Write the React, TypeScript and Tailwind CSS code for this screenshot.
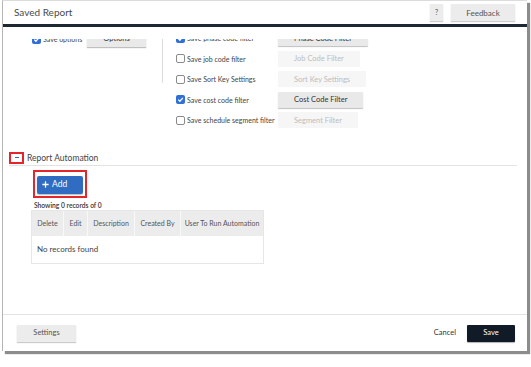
import React from "react";

function Box({ checked }: { checked?: boolean }) {
  return checked ? (
    <span className="w-[9px] h-[9px] rounded-[2px] bg-[#2f6fd6] flex items-center justify-center shrink-0">
      <svg width="7" height="7" viewBox="0 0 10 10">
        <path d="M1.8 5.2 L4.1 7.5 L8.4 2.6" stroke="white" strokeWidth="1.8" fill="none" />
      </svg>
    </span>
  ) : (
    <span className="w-[9px] h-[9px] rounded-[2px] border border-[#8a8a8a] bg-white shrink-0" />
  );
}

function FilterBtn({ label, enabled }: { label: string; enabled?: boolean }) {
  return enabled ? (
    <span className="h-[16px] px-[16px] flex items-center bg-[#e9e9e9] text-[#333] text-[7.5px] rounded-[1px] shadow-[0_1px_1px_rgba(0,0,0,0.25)] whitespace-nowrap">
      {label}
    </span>
  ) : (
    <span className="h-[16px] px-[16px] flex items-center bg-[#f6f6f6] text-[#bdbdbd] text-[7.5px] rounded-[1px] whitespace-nowrap">
      {label}
    </span>
  );
}

const rows = [
  { label: "Save phase code filter", checked: true, btn: "Phase Code Filter", enabled: true },
  { label: "Save job code filter", checked: false, btn: "Job Code Filter", enabled: false },
  { label: "Save Sort Key Settings", checked: false, btn: "Sort Key Settings", enabled: false },
  { label: "Save cost code filter", checked: true, btn: "Cost Code Filter", enabled: true },
  { label: "Save schedule segment filter", checked: false, btn: "Segment Filter", enabled: false },
];

export default function App() {
  return (
    <div className="w-[531px] h-[367px] bg-white font-['Lato',sans-serif] overflow-hidden">
      <div className="ml-[2px] w-[525px] h-[351px] bg-white border-l border-t border-[#b5b5b5] border-t-[#dcdcdc] shadow-[3px_3px_1px_#8c8c8c] flex flex-col">
        {/* Header */}
        <div className="h-[23px] flex items-center pl-[11px] pr-[12px] shrink-0">
          <span className="text-[10px] text-[#4a4a4a]">Saved Report</span>
          <div className="flex-1" />
          <span className="w-[13px] h-[17px] flex items-center justify-center bg-[#ececec] text-[#555] text-[7px] shadow-[0_1px_1px_rgba(0,0,0,0.2)]">?</span>
          <span className="ml-[8px] w-[64px] h-[17px] flex items-center justify-center bg-[#ececec] text-[#555] text-[8px] shadow-[0_1px_1px_rgba(0,0,0,0.2)]">Feedback</span>
        </div>
        <div className="h-[3px] bg-[#1e2833] shrink-0" />
        <div className="h-[12px] shrink-0" />

        {/* Scroll body */}
        <div className="flex-1 overflow-hidden">
          <div className="mt-[-11px]">
            <div className="flex">
              <div className="w-[160px] h-[55px] border-r border-[#dcdcdc] pl-[29px]">
                <div className="h-[22px] flex items-center">
                  <Box checked />
                  <span className="ml-[2px] text-[7px] text-[#444] w-[44px] whitespace-nowrap">Save options</span>
                  <span className="h-[16px] w-[59px] flex items-center justify-center bg-[#e9e9e9] text-[#333] text-[7.5px] shadow-[0_1px_1px_rgba(0,0,0,0.25)]">Options</span>
                </div>
              </div>
              <div className="pl-[13px]">
                {rows.map((r) => (
                  <div key={r.label} className="h-[20.5px] flex items-center">
                    <div className="w-[102px] flex items-center">
                      <Box checked={r.checked} />
                      <span className="ml-[2px] text-[7px] text-[#444] whitespace-nowrap">{r.label}</span>
                    </div>
                    <FilterBtn label={r.btn} enabled={r.enabled} />
                  </div>
                ))}
              </div>
            </div>

            {/* Report Automation */}
            <div className="mt-[21px] ml-[6px] mr-[10px] h-[14px] border-b border-[#e3e3e3] flex items-center relative">
              <span className="w-[15px] h-[12px] border-2 border-[#e3262b] flex items-center justify-center self-start">
                <span className="w-[4px] h-[1.5px] bg-[#2f6cc2]" />
              </span>
              <span className="ml-[3px] text-[8.5px] text-[#444]">Report Automation</span>
            </div>

            <div className="ml-[30px] mt-[4px] w-[54px] h-[28px] border-2 border-[#e3262b] px-[2px] pt-[4px] pb-[2px]">
              <div className="w-full h-full bg-[#2f6cc2] rounded-[2px] flex items-center pl-[5px] text-white shadow-[0_1px_1px_rgba(0,0,0,0.25)]">
                <svg width="7" height="7" viewBox="0 0 10 10">
                  <path d="M5 0.5 V9.5 M0.5 5 H9.5" stroke="white" strokeWidth="1.8" />
                </svg>
                <span className="ml-[3px] text-[8.5px]">Add</span>
              </div>
            </div>

            <div className="ml-[31px] mt-[3px] h-[9px] flex items-center text-[6.7px] text-[#333] font-semibold">
              Showing 0 records of 0
            </div>

            <div className="ml-[28px] w-[233px] border border-[#e6e6e6]">
              <div className="flex h-[25px] bg-[#ececec] text-[7px] text-[#555]">
                <div className="w-[32px] flex items-center justify-center border-r border-[#f8f8f8]">Delete</div>
                <div className="w-[24px] flex items-center justify-center border-r border-[#f8f8f8]">Edit</div>
                <div className="w-[47px] flex items-center justify-center border-r border-[#f8f8f8]">Description</div>
                <div className="w-[46px] flex items-center justify-center border-r border-[#f8f8f8]">Created By</div>
                <div className="flex-1 flex items-center justify-center">User To Run Automation</div>
              </div>
              <div className="h-[27px] flex items-center pl-[5px] text-[8px] text-[#444]">No records found</div>
            </div>
          </div>
        </div>

        {/* Footer */}
        <div className="h-[37px] border-t border-[#e3e3e3] flex items-center pl-[14px] pr-[12px] shrink-0">
          <span className="w-[59px] h-[17px] flex items-center justify-center bg-[#ececec] text-[#555] text-[7.5px] shadow-[0_1px_1px_rgba(0,0,0,0.2)]">Settings</span>
          <div className="flex-1" />
          <span className="text-[7.5px] text-[#333]">Cancel</span>
          <span className="ml-[11px] w-[48px] h-[17px] flex items-center justify-center bg-[#111b27] text-white text-[7.5px] rounded-[1px] shadow-[0_1px_1px_rgba(0,0,0,0.3)]">Save</span>
        </div>
      </div>
    </div>
  );
}
